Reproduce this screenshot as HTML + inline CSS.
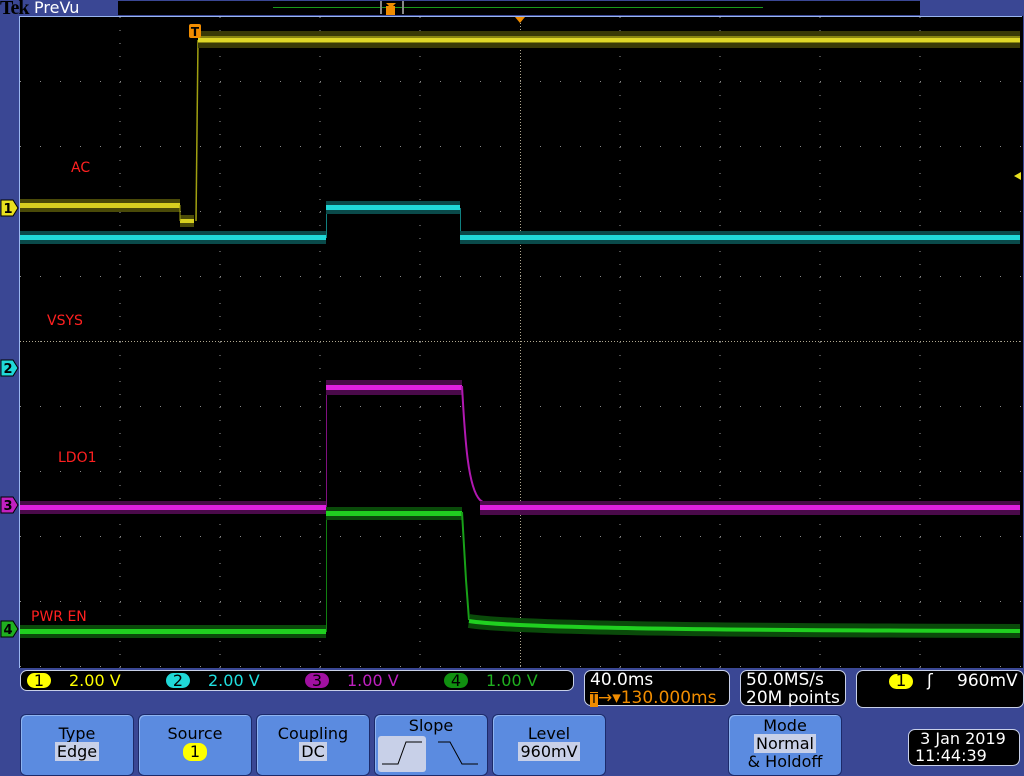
<!DOCTYPE html>
<html><head><style>
html,body{margin:0;padding:0;background:#3a4794;width:1024px;height:768px;overflow:hidden;font-family:"DejaVu Sans","Liberation Sans",sans-serif}
.abs{position:absolute}
.btn{position:absolute;top:714px;height:60px;background:#5b8be0;border:1px solid #1c2a6a;border-radius:6px;box-shadow:inset 1px 1px 0 #8fb4f0;text-align:center;font-size:16px;color:#000;line-height:18px}
.hl{background:#c8d0e8;padding:0 2px}
.box{position:absolute;background:#000;border:1px solid #c8d0e8;border-radius:7px;color:#fff;font-size:17px}
.lbl{position:absolute;color:#ff2020;font-size:14px}
</style></head><body>
<div class="abs" style="left:0;top:-3px;font-family:'Liberation Serif',serif;font-size:20px;font-weight:bold;color:#000;letter-spacing:-1px">Tek</div>
<div class="abs" style="left:34px;top:-2px;font-size:16px;color:#fff">PreVu</div>
<div class="abs" style="left:118px;top:1px;width:802px;height:14px;background:#000"></div>
<div class="abs" style="left:273px;top:7px;width:490px;height:1px;background:#1a9a1a"></div>
<div class="abs" style="left:380px;top:1px;width:20px;height:13px;border-left:2px solid #888;border-right:2px solid #888"></div>
<svg class="abs" style="left:0;top:0" width="1024" height="768">
<defs>
<pattern id="hd" width="20" height="65" patternUnits="userSpaceOnUse" x="20" y="16"><rect x="0" y="0" width="1" height="1" fill="#888"/></pattern>
</defs>
<rect x="19" y="16" width="1004" height="652" fill="#000"/>
<line x1="19.5" y1="16" x2="19.5" y2="668" stroke="#9ab6f0"/>
<line x1="20" y1="16.5" x2="1022" y2="16.5" stroke="#9ab6f0"/>
<rect x="20" y="17" width="1002" height="651" fill="url(#hd)"/>
<g stroke="#999" stroke-dasharray="1 12">
<line x1="120" y1="17" x2="120" y2="668"/><line x1="220" y1="17" x2="220" y2="668"/><line x1="320" y1="17" x2="320" y2="668"/><line x1="420" y1="17" x2="420" y2="668"/><line x1="620" y1="17" x2="620" y2="668"/><line x1="720" y1="17" x2="720" y2="668"/><line x1="820" y1="17" x2="820" y2="668"/><line x1="920" y1="17" x2="920" y2="668"/>
</g>
<line x1="520.5" y1="17" x2="520.5" y2="668" stroke="#b0a890" stroke-dasharray="1 2"/>
<line x1="20" y1="341.5" x2="1022" y2="341.5" stroke="#b0a890" stroke-dasharray="1 2"/>
<!-- yellow -->
<g>
<rect x="20" y="199" width="160" height="13" fill="#4a4a08"/><rect x="20" y="203" width="160" height="5" fill="#d8d020"/>
<rect x="180" y="215" width="14" height="12" fill="#4a4a08"/><rect x="180" y="219" width="14" height="4" fill="#d8d020"/>
<line x1="196" y1="221" x2="198" y2="40" stroke="#a0a010" stroke-width="1.5"/>
<rect x="198" y="31" width="822" height="17" fill="#3a3a06"/><rect x="198" y="36" width="822" height="7" fill="#8a8612"/><rect x="198" y="38" width="822" height="4" fill="#e0d828"/>
<line x1="180" y1="205" x2="180" y2="221" stroke="#a0a010"/>
<!-- cyan -->
<rect x="20" y="231" width="306" height="13" fill="#0a4a4a"/><rect x="20" y="235" width="306" height="5" fill="#20d8d8"/>
<line x1="326.5" y1="208" x2="326.5" y2="238" stroke="#108080"/>
<rect x="326" y="201" width="134" height="13" fill="#0a4a4a"/><rect x="326" y="205" width="134" height="5" fill="#20d8d8"/>
<line x1="460.5" y1="208" x2="460.5" y2="238" stroke="#108080"/>
<rect x="460" y="231" width="560" height="13" fill="#0a4a4a"/><rect x="460" y="235" width="560" height="5" fill="#20d8d8"/>
<!-- magenta -->
<rect x="20" y="501" width="306" height="13" fill="#4a0a4a"/><rect x="20" y="505" width="306" height="5" fill="#e020e0"/>
<line x1="326.5" y1="388" x2="326.5" y2="508" stroke="#801080"/>
<rect x="326" y="380" width="136" height="15" fill="#4a0a4a"/><rect x="326" y="385" width="136" height="5" fill="#e020e0"/>
<path d="M462 386 C465 440 468 488 480 500 C488 507 500 508 520 508" fill="none" stroke="#b018b0" stroke-width="2"/>
<rect x="480" y="501" width="540" height="14" fill="#4a0a4a"/><rect x="480" y="505" width="540" height="5" fill="#e020e0"/>
<!-- green -->
<rect x="20" y="625" width="306" height="13" fill="#0a4a0a"/><rect x="20" y="629" width="306" height="5" fill="#20d020"/>
<line x1="326.5" y1="514" x2="326.5" y2="632" stroke="#108010"/>
<rect x="326" y="507" width="136" height="13" fill="#0a4a0a"/><rect x="326" y="511" width="136" height="5" fill="#20d020"/>
<path d="M462 512 L466 580 L469 620" fill="none" stroke="#18a018" stroke-width="2"/>
<path d="M469 621 C500 626 600 630 1020 631" fill="none" stroke="#0a4a0a" stroke-width="14"/>
<path d="M469 621 C500 626 600 630 1020 631" fill="none" stroke="#20d020" stroke-width="4"/>
</g>
<!-- trigger markers -->
<rect x="189" y="24" width="12" height="14" rx="2" fill="#f08c00"/>
<text x="195" y="36" font-size="12" font-family="DejaVu Sans" text-anchor="middle" fill="#000" font-weight="bold">T</text>
<polygon points="515,17 525,17 520,23" fill="#f08c00"/>
<polygon points="386,3 396,3 391,8" fill="#f08c00"/>
<rect x="386" y="6" width="9" height="9" fill="#f08c00"/>
<polygon points="1021,172 1014,176 1021,180" fill="#e8e020"/>
<!-- channel markers -->
<g font-family="DejaVu Sans" font-size="13" font-weight="bold" text-anchor="middle">
<polygon points="1,200 13,200 18,208 13,216 1,216" fill="#e8e020" stroke="#000"/><text x="8" y="213" fill="#000">1</text>
<polygon points="1,360 13,360 18,368 13,376 1,376" fill="#20d8d8" stroke="#000"/><text x="8" y="373" fill="#000">2</text>
<polygon points="1,497 13,497 18,505 13,513 1,513" fill="#c020c0" stroke="#000"/><text x="8" y="510" fill="#000">3</text>
<polygon points="1,621 13,621 18,629 13,637 1,637" fill="#20b020" stroke="#000"/><text x="8" y="634" fill="#000">4</text>
</g>
</svg>
<div class="lbl" style="left:71px;top:160px">AC</div>
<div class="lbl" style="left:47px;top:313px">VSYS</div>
<div class="lbl" style="left:58px;top:450px">LDO1</div>
<div class="lbl" style="left:31px;top:609px">PWR EN</div>

<div class="box" style="left:20px;top:670px;width:552px;height:19px;font-size:16px;line-height:19px">
<span class="abs" style="left:6px;top:2px;width:24px;height:15px;border-radius:8px;background:#ff0;color:#000;text-align:center;line-height:15px">1</span><span class="abs" style="left:48px;color:#ff0">2.00 V</span>
<span class="abs" style="left:145px;top:2px;width:24px;height:15px;border-radius:8px;background:#20d8d8;color:#000;text-align:center;line-height:15px">2</span><span class="abs" style="left:187px;color:#20e0e0">2.00 V</span>
<span class="abs" style="left:284px;top:2px;width:24px;height:15px;border-radius:8px;background:#a010a0;color:#000;text-align:center;line-height:15px">3</span><span class="abs" style="left:326px;color:#c020c0">1.00 V</span>
<span class="abs" style="left:423px;top:2px;width:24px;height:15px;border-radius:8px;background:#109010;color:#000;text-align:center;line-height:15px">4</span><span class="abs" style="left:465px;color:#20b020">1.00 V</span>
</div>
<div class="box" style="left:584px;top:670px;width:146px;height:36px;line-height:18px;padding-left:5px;box-sizing:border-box">40.0ms<br><span style="color:#f08c00"><span style="background:#f08c00;color:#000;font-size:13px">T</span>→▾130.000ms</span></div>
<div class="box" style="left:740px;top:670px;width:106px;height:36px;line-height:18px;padding-left:5px;box-sizing:border-box">50.0MS/s<br>20M points</div>
<div class="box" style="left:856px;top:670px;width:166px;height:36px;line-height:18px">
<span class="abs" style="left:32px;top:3px;width:24px;height:15px;border-radius:8px;background:#ff0;color:#000;text-align:center;line-height:15px">1</span><span class="abs" style="left:70px;top:1px">ʃ</span><span class="abs" style="left:100px;top:1px">960mV</span></div>

<div class="btn" style="left:20px;width:112px"><div style="margin-top:10px">Type</div><span class="hl">Edge</span></div>
<div class="btn" style="left:138px;width:112px"><div style="margin-top:10px">Source</div><span style="display:inline-block;background:#ff0;border-radius:8px;width:24px">1</span></div>
<div class="btn" style="left:256px;width:112px"><div style="margin-top:10px">Coupling</div><span class="hl">DC</span></div>
<div class="btn" style="left:374px;width:112px"><div style="margin-top:2px">Slope</div>
<svg class="abs" style="left:3px;top:21px" width="106" height="36"><rect x="0" y="0" width="48" height="36" rx="3" fill="#c8d0e8"/><path d="M4 28 H20 L28 6 H44" stroke="#000" fill="none"/><path d="M60 6 H72 L84 28 H100" stroke="#000" fill="none"/></svg></div>
<div class="btn" style="left:492px;width:112px"><div style="margin-top:10px">Level</div><span class="hl">960mV</span></div>
<div class="btn" style="left:728px;width:112px"><div style="margin-top:2px">Mode</div><span class="hl">Normal</span><br>&amp; Holdoff</div>
<div class="box" style="left:908px;top:729px;width:112px;height:37px;line-height:17px;padding-left:6px;box-sizing:border-box;font-size:16px">&nbsp;3 Jan 2019<br>11:44:39</div>
</body></html>
